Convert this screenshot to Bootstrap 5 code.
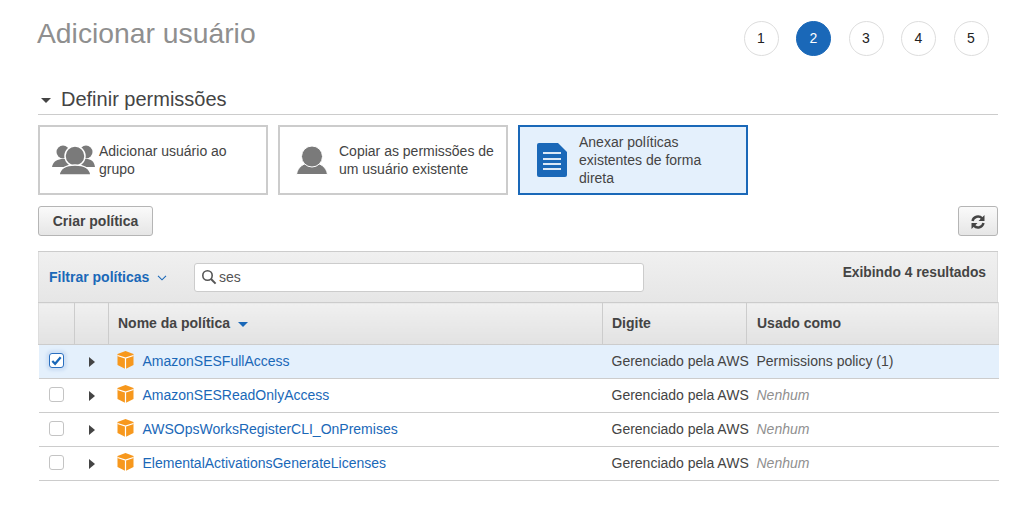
<!DOCTYPE html>
<html lang="en">
<head>
  <meta charset="UTF-8">
  <title>Adicionar usuário</title>
  <link href="https://cdn.jsdelivr.net/npm/bootstrap@5.3.0/dist/css/bootstrap.min.css" rel="stylesheet">
  <style>
    body { font-family: "Liberation Sans", Arial, sans-serif; font-size: 14px; color: #444; background: #fff; }
    .page-wrap { width: 960px; margin-left: 38px; }
    .top-bar { height: 77px; padding-top: 15px; }
    .page-title { font-size: 28.3px; line-height: 36px; color: #8f8f8f; margin: 0 0 0 -1px; font-weight: 400; }
    .steps { gap: 17.5px; margin-top: 6px; margin-right: 9.5px; }
    .step-dot { width: 35px; height: 35px; border-radius: 50%; border: 1px solid #ddd; color: #222; font-size: 14px; }
    .step-dot.on { background: #1a68b8; border-color: #1a68b8; color: #fff; font-weight: 400; }
    .sect-head { height: 38px; border-bottom: 1px solid #ccc; font-size: 20px; line-height: 24px; color: #444; padding-top: 7px; margin-bottom: 10px; }
    .sect-caret { width: 0; height: 0; border: 5px solid transparent; border-top-color: #444; border-bottom-width: 0; margin: 3px 10px 0 3px; }
    .opts { gap: 10px; margin-bottom: 11px; }
    .opt-box { width: 230px; height: 70px; border: 2px solid #ccc; line-height: 18px; padding-left: 12px; padding-right: 8px; }
    .opt-box.on { border-color: #1a68b8; background: #e4f0fc; }
    .opt-ico { flex: 0 0 47px; }
    .aws-btn { height: 30px; border: 1px solid #b5b5b5; border-radius: 3px; background: linear-gradient(#fafafa, #e6e6e6); color: #444; font-weight: 700; font-size: 14px; padding: 0; width: 115px; }
    .refresh-btn { width: 40px; }
    .btn-row { margin-bottom: 15px; }
    .tbl-wrap { border-top: 1px solid #ccc; }
    .filter-row { height: 50px; background: linear-gradient(#f0f0f0, #e6e6e6); border-left: 1px solid #ddd; border-right: 1px solid #ddd; padding: 0 11px 0 10px; }
    .filter-link { color: #1a68b8; font-weight: 700; width: 145px; margin-top: 1px; }
    .search-box { width: 450px; height: 29px; background: #fff; border: 1px solid #ccc; border-radius: 3px; padding-left: 6px; gap: 2px; color: #555; }
    .result-count { font-weight: 700; font-size: 13.8px; color: #444; margin-left: auto; margin-bottom: 7px; }
    .pol-table { table-layout: fixed; width: 960px; margin: 0; border-collapse: collapse; }
    .pol-table th { height: 42px; background: linear-gradient(#f0f0f0, #e2e2e2); border-top: 1px solid #ccc; border-bottom: 1px solid #ccc; border-left: 1px solid #ccc; font-size: 14px; font-weight: 700; color: #444; padding: 0 9px; vertical-align: middle; box-shadow: none; }
    .pol-table th:first-child { border-left: 1px solid #ddd; }
    .pol-table th:last-child { border-right: 1px solid #ddd; padding-left: 10px; }
    .pol-table td { height: 34px; border: 0; border-bottom: 1px solid #ccc; padding: 0 10px; vertical-align: middle; color: #444; font-size: 14px; white-space: nowrap; box-shadow: none; background: transparent; }
    .pol-table tr.picked td { background: #e4f0fc; }
    .pol-table td.cell-type { padding: 0 0 0 9px; }
    .pol-table td.none-txt { color: #8f8f8f; font-style: italic; }
    .pol-link { color: #1a68b8; text-decoration: none; }
    .sort-caret { display: inline-block; width: 0; height: 0; border: 5px solid transparent; border-top-color: #1a68b8; border-bottom-width: 0; margin-left: 4px; vertical-align: 1px; }
    .row-arrow { display: inline-block; width: 0; height: 0; border: 5px solid transparent; border-left: 6px solid #444; border-right-width: 0; margin: 7px 0 0 4px; }
    .fake-check { display: block; width: 15px; height: 15px; border: 1px solid #c4c4c4; border-radius: 3px; background: #fff; margin: -2px 0 0 0; }
    .fake-check.on { border-color: #2a6fc0; box-shadow: 0 0 3px 3px #cfe0f5; }
    .cube-cell { gap: 9px; margin-left: -2px; }
    .cube-ico { margin-bottom: 4px; }
  </style>
</head>
<body>
  <div class="page-wrap">
    <div class="top-bar d-flex justify-content-between align-items-start">
      <h1 class="page-title">Adicionar usuário</h1>
      <div class="steps d-flex">
        <div class="step-dot d-flex align-items-center justify-content-center">1</div>
        <div class="step-dot on d-flex align-items-center justify-content-center">2</div>
        <div class="step-dot d-flex align-items-center justify-content-center">3</div>
        <div class="step-dot d-flex align-items-center justify-content-center">4</div>
        <div class="step-dot d-flex align-items-center justify-content-center">5</div>
      </div>
    </div>

    <div class="sect-head d-flex align-items-center">
      <span class="sect-caret"></span><span>Definir permissões</span>
    </div>

    <div class="opts d-flex">
      <div class="opt-box d-flex align-items-center">
        <svg class="opt-ico" width="47" height="30" viewBox="0 0 47 30">
          <g fill="#7a7a7a">
            <circle cx="11" cy="7" r="6.5"/><circle cx="34" cy="7" r="6.5"/>
            <path d="M0 22c1-6 6-8 11-8s9 2 11 8z"/><path d="M23 22c2-6 6-8 11-8s8 2 9 8z"/>
          </g>
          <g fill="#7a7a7a" stroke="#fff" stroke-width="1.5">
            <circle cx="23" cy="11" r="10"/>
            <path d="M7 30c1-7 8-10 16-10s15 3 16 10z"/>
          </g>
        </svg>
        <span>Adicionar usuário ao grupo</span>
      </div>
      <div class="opt-box d-flex align-items-center">
        <svg class="opt-ico" width="47" height="30" viewBox="0 0 47 30">
          <g fill="#7a7a7a" stroke="#fff" stroke-width="1">
            <path d="M4.5 29.5c1-8 8-12 15.500-12s14.500 4 15.500 12z"/>
            <circle cx="20" cy="11.500" r="10.500"/>
          </g>
        </svg>
        <span>Copiar as permissões de um usuário existente</span>
      </div>
      <div class="opt-box on d-flex align-items-center">
        <svg class="opt-ico" width="47" height="34" viewBox="0 0 47 34">
          <path fill="#1a68b8" d="M7 0h19l9 9v23a2 2 0 0 1-2 2H7a2 2 0 0 1-2-2V2a2 2 0 0 1 2-2z"/>
          <g fill="#dce9f7">
            <rect x="11" y="9" width="18" height="2"/><rect x="11" y="15" width="18" height="2"/>
            <rect x="11" y="20" width="18" height="2"/><rect x="11" y="25" width="18" height="2"/>
          </g>
        </svg>
        <span>Anexar políticas existentes de forma direta</span>
      </div>
    </div>

    <div class="btn-row d-flex justify-content-between">
      <button type="button" class="aws-btn">Criar política</button>
      <button type="button" class="aws-btn refresh-btn" aria-label="Atualizar">
        <svg width="16" height="16" viewBox="0 0 16 16" fill="none" stroke="#444" stroke-width="2.4">
          <path d="M2.5 7a5.6 5.6 0 0 1 9.6-2.6"/><path d="M13.5 9a5.6 5.6 0 0 1-9.6 2.6"/>
          <path fill="#444" stroke="none" d="M14.5 1v6h-6zM1.5 15V9h6z"/>
        </svg>
      </button>
    </div>

    <div class="tbl-wrap">
      <div class="filter-row d-flex align-items-center">
        <div class="filter-link d-flex align-items-center gap-2">
          Filtrar políticas
          <svg width="10" height="6" viewBox="0 0 10 6" fill="none" stroke="#1a68b8" stroke-width="1.1"><path d="M1 .8l4 4 4-4"/></svg>
        </div>
        <div class="search-box d-flex align-items-center">
          <svg width="16" height="16" viewBox="0 0 16 16" fill="none" stroke="#555" stroke-width="1.6"><circle cx="6.5" cy="6.5" r="4.7"/><path d="M10 10l4.600 4.600" stroke-width="2"/></svg>
          <span>ses</span>
        </div>
        <div class="result-count">Exibindo 4 resultados</div>
      </div>
      <table class="table pol-table">
        <colgroup><col width="36"><col width="34"><col width="494"><col width="144"><col width="252"></colgroup>
        <thead>
          <tr>
            <th></th>
            <th></th>
            <th>Nome da política <span class="sort-caret"></span></th>
            <th>Digite</th>
            <th>Usado como</th>
          </tr>
        </thead>
        <tbody>
          <tr class="picked">
            <td><span class="fake-check on">
              <svg class="d-block" width="13" height="13" viewBox="0 0 14 14" fill="none" stroke="#1a68b8" stroke-width="2.4"><path d="M2.500 7.500l3 3 6-7"/></svg>
            </span></td>
            <td><span class="row-arrow"></span></td>
            <td><div class="cube-cell d-flex align-items-center">
              <svg class="cube-ico" width="17" height="18" viewBox="0 0 17 18"><path fill="#f7981d" d="M8.500 0l8 3v11l-8 4-8-4V3z"/><path fill="none" stroke="#fff" stroke-width="1.200" d="M.5 4.500l8 2.500 8-2.500M8.500 7v11"/></svg>
              <a class="pol-link" href="#">AmazonSESFullAccess</a>
            </div></td>
            <td class="cell-type">Gerenciado pela AWS</td>
            <td>Permissions policy (1)</td>
          </tr>
          <tr>
            <td><span class="fake-check"></span></td>
            <td><span class="row-arrow"></span></td>
            <td><div class="cube-cell d-flex align-items-center">
              <svg class="cube-ico" width="17" height="18" viewBox="0 0 17 18"><path fill="#f7981d" d="M8.500 0l8 3v11l-8 4-8-4V3z"/><path fill="none" stroke="#fff" stroke-width="1.200" d="M.5 4.500l8 2.500 8-2.500M8.500 7v11"/></svg>
              <a class="pol-link" href="#">AmazonSESReadOnlyAccess</a>
            </div></td>
            <td class="cell-type">Gerenciado pela AWS</td>
            <td class="none-txt">Nenhum</td>
          </tr>
          <tr>
            <td><span class="fake-check"></span></td>
            <td><span class="row-arrow"></span></td>
            <td><div class="cube-cell d-flex align-items-center">
              <svg class="cube-ico" width="17" height="18" viewBox="0 0 17 18"><path fill="#f7981d" d="M8.500 0l8 3v11l-8 4-8-4V3z"/><path fill="none" stroke="#fff" stroke-width="1.200" d="M.5 4.500l8 2.500 8-2.500M8.500 7v11"/></svg>
              <a class="pol-link" href="#">AWSOpsWorksRegisterCLI_OnPremises</a>
            </div></td>
            <td class="cell-type">Gerenciado pela AWS</td>
            <td class="none-txt">Nenhum</td>
          </tr>
          <tr>
            <td><span class="fake-check"></span></td>
            <td><span class="row-arrow"></span></td>
            <td><div class="cube-cell d-flex align-items-center">
              <svg class="cube-ico" width="17" height="18" viewBox="0 0 17 18"><path fill="#f7981d" d="M8.500 0l8 3v11l-8 4-8-4V3z"/><path fill="none" stroke="#fff" stroke-width="1.200" d="M.5 4.500l8 2.500 8-2.500M8.500 7v11"/></svg>
              <a class="pol-link" href="#">ElementalActivationsGenerateLicenses</a>
            </div></td>
            <td class="cell-type">Gerenciado pela AWS</td>
            <td class="none-txt">Nenhum</td>
          </tr>
        </tbody>
      </table>
    </div>
  </div>
  <script src="https://cdn.jsdelivr.net/npm/bootstrap@5.3.0/dist/js/bootstrap.bundle.min.js"></script>
</body>
</html>
